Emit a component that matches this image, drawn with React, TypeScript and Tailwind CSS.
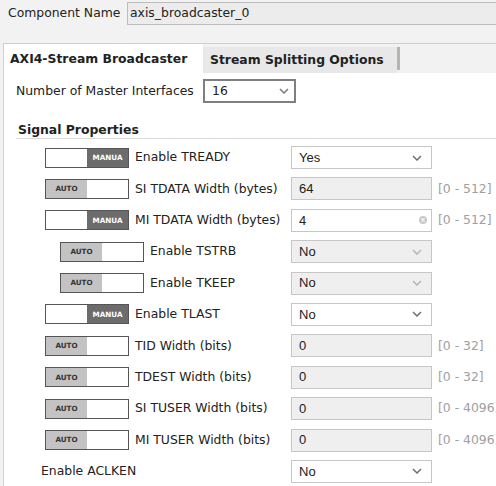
import React from "react";

type Mode = "manual" | "auto" | "none";

interface Row {
  mode: Mode;
  indent?: boolean;
  label: string;
  kind: "select" | "readonly" | "input";
  value: string;
  disabled?: boolean;
  range?: string;
}

const rows: Row[] = [
  { mode: "manual", label: "Enable TREADY", kind: "select", value: "Yes" },
  { mode: "auto", label: "SI TDATA Width (bytes)", kind: "readonly", value: "64", range: "[0 - 512]" },
  { mode: "manual", label: "MI TDATA Width (bytes)", kind: "input", value: "4", range: "[0 - 512]" },
  { mode: "auto", indent: true, label: "Enable TSTRB", kind: "select", value: "No", disabled: true },
  { mode: "auto", indent: true, label: "Enable TKEEP", kind: "select", value: "No", disabled: true },
  { mode: "manual", label: "Enable TLAST", kind: "select", value: "No" },
  { mode: "auto", label: "TID Width (bits)", kind: "readonly", value: "0", range: "[0 - 32]" },
  { mode: "auto", label: "TDEST Width (bits)", kind: "readonly", value: "0", range: "[0 - 32]" },
  { mode: "auto", label: "SI TUSER Width (bits)", kind: "readonly", value: "0", range: "[0 - 4096]" },
  { mode: "auto", label: "MI TUSER Width (bits)", kind: "readonly", value: "0", range: "[0 - 4096]" },
  { mode: "none", label: "Enable ACLKEN", kind: "select", value: "No" },
];

const Chevron = ({ color }: { color: string }) => (
  <svg width="10" height="6" viewBox="0 0 10 6" className="shrink-0">
    <polyline points="1,1 5,5 9,1" fill="none" stroke={color} strokeWidth="1.5" />
  </svg>
);

const Toggle = ({ mode }: { mode: Mode }) => {
  if (mode === "manual") {
    return (
      <div className="flex w-[84px] h-[20px] shrink-0 border border-[#555]">
        <div className="flex-1 bg-white" />
        <div className="w-[41px] bg-[#6c6c6c] text-white text-[7.2px] font-bold flex items-center justify-center leading-none">
          MANUA
        </div>
      </div>
    );
  }
  return (
    <div className="flex w-[84px] h-[20px] shrink-0 border border-[#555]">
      <div className="w-[41px] bg-[#c3c3c3] text-[#333] text-[7.2px] font-bold flex items-center justify-center leading-none">
        AUTO
      </div>
      <div className="flex-1 bg-white" />
    </div>
  );
};

const Control = ({ row }: { row: Row }) => {
  const bg = row.kind === "readonly" || row.disabled ? "bg-[#efefef]" : "bg-white";
  return (
    <div
      className={`flex items-center justify-between w-[141px] h-[23px] shrink-0 border border-[#c6c6c6] pl-[7px] pr-[9px] ${bg} font-['Liberation_Sans',sans-serif] text-[13px] text-[#222]`}
    >
      <span>{row.value}</span>
      {row.kind === "select" && <Chevron color={row.disabled ? "#b5b5b5" : "#6f6f6f"} />}
      {row.kind === "input" && (
        <svg width="8" height="8" viewBox="0 0 8 8" className="mr-[-5px]">
          <circle cx="4" cy="4" r="4" fill="#c9c9c9" />
          <path d="M2.5 2.5 L5.5 5.5 M5.5 2.5 L2.5 5.5" stroke="white" strokeWidth="1.2" />
        </svg>
      )}
    </div>
  );
};

export default function App() {
  return (
    <div className="w-[496px] h-[486px] overflow-hidden bg-[#f2f2f2] font-['DejaVu_Sans',sans-serif] text-[12.4px] text-[#222]">
      {/* Component name */}
      <div className="flex items-center pt-[2px] pl-[8px]">
        <span className="w-[119px] shrink-0">Component Name</span>
        <div className="w-[400px] h-[23px] shrink-0 border border-[#bdbdbd] bg-[#ececec] pl-[2px] flex items-center">
          axis_broadcaster_0
        </div>
      </div>

      {/* Tabs + panel */}
      <div className="mt-[18px] ml-[3px] w-[500px] border-l border-t border-[#cfcfcf]">
        <div className="flex h-[29px]">
          <div className="w-[199px] bg-white pl-[6px] pt-[1px] flex items-center font-bold">AXI4-Stream Broadcaster</div>
          <div className="mt-[3px] w-[194px] bg-[#e8e8e8] pl-[7px] flex items-center font-bold">
            Stream Splitting Options
          </div>
          <div className="mt-[3px] mb-[3px] w-[3px] bg-[#b4b4b4]" />
        </div>

        <div className="bg-white h-[420px] pt-[6px]">
          <div className="flex items-center h-[24px] pl-[12px]">
            <span className="w-[187px] shrink-0">Number of Master Interfaces</span>
            <div className="flex items-center justify-between w-[93px] h-[24px] border-2 border-[#7f7f7f] bg-white pl-[7px] pr-[5px]">
              <span>16</span>
              <Chevron color="#7a7a7a" />
            </div>
          </div>

          <div className="mt-[18px] ml-[12px] pl-[2px] h-[18px] leading-[17px] font-bold border-b border-[#d9d9d9]">
            Signal Properties
          </div>

          <div className="mt-[7px] flex flex-col gap-[8.4px]">
            {rows.map((row) => (
              <div key={row.label} className="flex items-center h-[23px] whitespace-nowrap">
                <div
                  className={`flex items-center w-[287px] shrink-0 ${
                    row.mode === "none" ? "pl-[37px]" : row.indent ? "pl-[56px]" : "pl-[41px]"
                  }`}
                >
                  {row.mode !== "none" && <Toggle mode={row.mode} />}
                  <span className={row.mode !== "none" ? "ml-[6px]" : ""}>{row.label}</span>
                </div>
                <Control row={row} />
                {row.range && (
                  <span className="ml-[6px] text-[12.4px] text-[#a0a0a0]">{row.range}</span>
                )}
              </div>
            ))}
          </div>
        </div>
      </div>
    </div>
  );
}
